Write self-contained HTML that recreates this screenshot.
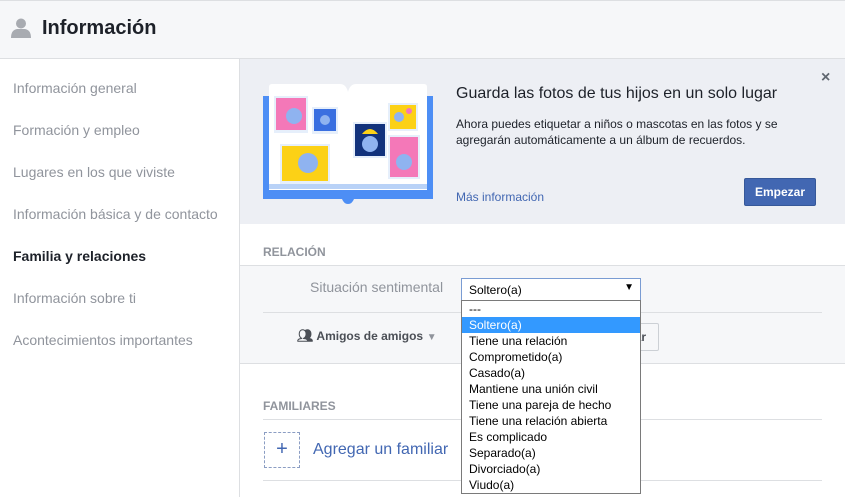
<!DOCTYPE html>
<html><head><meta charset="utf-8"><style>
*{margin:0;padding:0;box-sizing:border-box}
body{width:845px;height:497px;overflow:hidden;font-family:"Liberation Sans",Arial,sans-serif;background:#fff;position:relative}
.a{position:absolute}
</style></head><body>
<div class="a" style="left:0;top:0;width:845px;height:59px;background:#f6f7f9;border-top:1px solid #dddfe2;border-bottom:1px solid #dddfe2"></div>
<svg class="a" style="left:10px;top:17px" width="22" height="22" viewBox="0 0 22 22"><circle cx="11" cy="6.5" r="5" fill="#a8abb1"/><path d="M1 21 Q1 13 7 12 L15 12 Q21 13 21 21 Z" fill="#a8abb1"/></svg>
<div class="a" style="left:42px;top:17px;font-size:20px;font-weight:bold;color:#1d2129">Información</div>
<div class="a" style="left:239px;top:59px;width:1px;height:438px;background:#dddfe2"></div>
<div class="a" style="left:13px;top:80px;font-size:14px;color:#90949c;line-height:16px">
<div style="height:42px">Información general</div>
<div style="height:42px">Formación y empleo</div>
<div style="height:42px">Lugares en los que viviste</div>
<div style="height:42px">Información básica y de contacto</div>
<div style="height:42px;color:#1d2129;font-weight:bold">Familia y relaciones</div>
<div style="height:42px">Información sobre ti</div>
<div style="height:42px">Acontecimientos importantes</div>
</div>
<div class="a" style="left:240px;top:59px;width:605px;height:165px;background:#edeff4"></div>
<svg class="a" style="left:262px;top:84px" width="172" height="122" viewBox="0 0 172 122">
<rect x="1" y="12" width="170" height="103" fill="#4d8ef5"/>
<path d="M7 3 Q7 0 10 0 L78 0 Q84 0 86 8 Q88 0 94 0 L162 0 Q165 0 165 3 L165 106 L7 106 Z" fill="#fff"/>
<rect x="7" y="100" width="158" height="5" fill="#b9d2f7"/>
<path d="M80 115 L92 115 Q90 120 86 120 Q82 120 80 115Z" fill="#4d8ef5"/>
<rect x="12" y="12" width="34" height="37" fill="#e6effb"/><rect x="14" y="14" width="30" height="32" fill="#f478b8"/><circle cx="32" cy="32" r="8" fill="#8fb3f0"/>
<rect x="50" y="23" width="26" height="27" fill="#e6effb"/><rect x="52" y="25" width="22" height="22" fill="#3a6fe0"/><circle cx="63" cy="36" r="5" fill="#8fb3f0"/>
<rect x="18" y="60" width="50" height="40" fill="#e6effb"/><rect x="20" y="62" width="46" height="35" fill="#fcd116"/><circle cx="46" cy="79" r="10" fill="#8fb3f0"/>
<rect x="91" y="38" width="34" height="36" fill="#e6effb"/><rect x="93" y="40" width="30" height="32" fill="#12327c"/><circle cx="108" cy="60" r="8" fill="#8fb3f0"/><path d="M100 50 Q108 40 116 50Z" fill="#fcd116"/>
<rect x="126" y="19" width="30" height="28" fill="#e6effb"/><rect x="128" y="21" width="26" height="24" fill="#fcd116"/><circle cx="137" cy="33" r="5" fill="#8fb3f0"/><circle cx="147" cy="27" r="3" fill="#f478b8"/>
<rect x="126" y="51" width="32" height="44" fill="#e6effb"/><rect x="128" y="53" width="28" height="40" fill="#f478b8"/><circle cx="142" cy="78" r="8" fill="#8fb3f0"/>
</svg>
<div class="a" style="left:456px;top:85px;font-size:16px;color:#1d2129">Guarda las fotos de tus hijos en un solo lugar</div>
<div class="a" style="left:456px;top:116px;font-size:12px;color:#1d2129;line-height:16px">Ahora puedes etiquetar a niños o mascotas en las fotos y se<br>agregarán automáticamente a un álbum de recuerdos.</div>
<div class="a" style="left:456px;top:190px;font-size:12px;color:#4267b2">Más información</div>
<div class="a" style="left:821px;top:69px;font-size:16px;font-weight:bold;color:#606770">×</div>
<div class="a" style="left:744px;top:178px;width:72px;height:28px;background:#4267b2;border:1px solid #365899;border-radius:2px;color:#fff;font-size:12px;font-weight:bold;text-align:center;line-height:26px">Empezar</div>
<div class="a" style="left:263px;top:245px;font-size:12px;font-weight:bold;color:#90949c">RELACIÓN</div>
<div class="a" style="left:240px;top:265px;width:605px;height:99px;background:#f6f7f9;border-top:1px solid #dddfe2;border-bottom:1px solid #dddfe2"></div>
<div class="a" style="left:263px;top:312px;width:559px;height:1px;background:#dddfe2"></div>
<div class="a" style="left:310px;top:279px;font-size:14px;color:#90949c">Situación sentimental</div>
<div class="a" style="left:297px;top:328px;font-size:13px;font-weight:bold;color:#4b4f56">&#128101;&#xFE0E;<span style="font-size:12px"> Amigos de amigos</span> <span style="color:#90949c;font-size:10px">▼</span></div>
<div class="a" style="left:610px;top:323px;width:49px;height:28px;background:#f6f7f9;border:1px solid #ccd0d5;border-radius:2px;font-size:12px;font-weight:bold;color:#4b4f56;line-height:26px;text-align:right;padding-right:12px">ar</div>
<div class="a" style="left:263px;top:399px;font-size:12px;font-weight:bold;color:#90949c">FAMILIARES</div>
<div class="a" style="left:263px;top:419px;width:559px;height:1px;background:#dddfe2"></div>
<div class="a" style="left:264px;top:432px;width:36px;height:36px;border:1px dashed #8b9dc3;color:#4267b2;font-size:20px;text-align:center;line-height:32px">+</div>
<div class="a" style="left:313px;top:441px;font-size:16px;color:#4267b2">Agregar un familiar</div>
<div class="a" style="left:263px;top:480px;width:559px;height:1px;background:#dddfe2"></div>
<div class="a" style="left:461px;top:278px;width:180px;height:23px;background:#fff;border:1px solid #7a9cd3;font-size:12px;color:#000;padding:4px 0 0 7px">Soltero(a)<span style="position:absolute;right:6px;top:3px;font-size:10px">▼</span></div>
<div class="a" style="left:461px;top:300px;width:180px;height:194px;background:#fff;border:1px solid #7a7a7a;font-size:12px;color:#000;line-height:16px">
<div style="padding-left:7px">---</div>
<div style="padding-left:7px;background:#3399ff;color:#fff">Soltero(a)</div>
<div style="padding-left:7px">Tiene una relación</div>
<div style="padding-left:7px">Comprometido(a)</div>
<div style="padding-left:7px">Casado(a)</div>
<div style="padding-left:7px">Mantiene una unión civil</div>
<div style="padding-left:7px">Tiene una pareja de hecho</div>
<div style="padding-left:7px">Tiene una relación abierta</div>
<div style="padding-left:7px">Es complicado</div>
<div style="padding-left:7px">Separado(a)</div>
<div style="padding-left:7px">Divorciado(a)</div>
<div style="padding-left:7px">Viudo(a)</div>
</div>
</body></html>
